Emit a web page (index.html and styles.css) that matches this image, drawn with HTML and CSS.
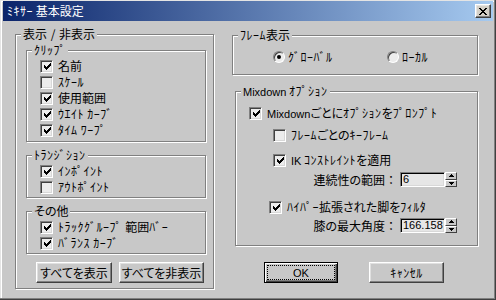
FILE: index.html
```html
<!DOCTYPE html>
<html lang="ja">
<head>
<meta charset="utf-8">
<link rel="stylesheet" href="styles.css">
</head>
<body>
<div class="window">
  <div class="titlebar">
    <span class="title"><span class="hk">ﾐｷｻｰ</span> 基本設定</span>
    <span class="close-btn"><svg width="8" height="7" viewBox="0 0 8 7" shape-rendering="crispEdges"><path d="M0 0h2v1h1v1h2V1h1V0h2v1H7v1H6v1H5v1h1v1h1v1h1v1H6V6H5V5H3v1H2v1H0V6h1V5h1V4h1V3H2V2H1V1H0z" fill="#000"/></svg></span>
  </div>
  <div class="client">
    <div class="col-left">
      <fieldset class="group">
        <legend class="legend-plain">表示 / 非表示</legend>
        <div class="body body-main">
          <fieldset class="group sub">
            <legend><span class="hk">ｸﾘｯﾌﾟ</span></legend>
            <div class="body body-sub body-clip">
              <div class="row"><span class="cb"><svg width="7" height="7" viewBox="0 0 7 7" shape-rendering="crispEdges"><path d="M6 0h1v1h-1zM5 1h2v1h-2zM0 2h1v1h-1zM4 2h3v1h-3zM0 3h2v1h-2zM3 3h3v1h-3zM0 4h5v1h-5zM1 5h3v1h-3zM2 6h1v1h-1z"/></svg></span><span>名前</span></div>
              <div class="row"><span class="cb"></span><span class="hk">ｽｹｰﾙ</span></div>
              <div class="row"><span class="cb"><svg width="7" height="7" viewBox="0 0 7 7" shape-rendering="crispEdges"><path d="M6 0h1v1h-1zM5 1h2v1h-2zM0 2h1v1h-1zM4 2h3v1h-3zM0 3h2v1h-2zM3 3h3v1h-3zM0 4h5v1h-5zM1 5h3v1h-3zM2 6h1v1h-1z"/></svg></span><span>使用範囲</span></div>
              <div class="row"><span class="cb"><svg width="7" height="7" viewBox="0 0 7 7" shape-rendering="crispEdges"><path d="M6 0h1v1h-1zM5 1h2v1h-2zM0 2h1v1h-1zM4 2h3v1h-3zM0 3h2v1h-2zM3 3h3v1h-3zM0 4h5v1h-5zM1 5h3v1h-3zM2 6h1v1h-1z"/></svg></span><span class="hk">ｳｴｲﾄ ｶｰﾌﾞ</span></div>
              <div class="row"><span class="cb"><svg width="7" height="7" viewBox="0 0 7 7" shape-rendering="crispEdges"><path d="M6 0h1v1h-1zM5 1h2v1h-2zM0 2h1v1h-1zM4 2h3v1h-3zM0 3h2v1h-2zM3 3h3v1h-3zM0 4h5v1h-5zM1 5h3v1h-3zM2 6h1v1h-1z"/></svg></span><span class="hk">ﾀｲﾑ ﾜｰﾌﾟ</span></div>
            </div>
          </fieldset>
          <fieldset class="group sub sub-next">
            <legend><span class="hk">ﾄﾗﾝｼﾞｼｮﾝ</span></legend>
            <div class="body body-sub">
              <div class="row"><span class="cb"><svg width="7" height="7" viewBox="0 0 7 7" shape-rendering="crispEdges"><path d="M6 0h1v1h-1zM5 1h2v1h-2zM0 2h1v1h-1zM4 2h3v1h-3zM0 3h2v1h-2zM3 3h3v1h-3zM0 4h5v1h-5zM1 5h3v1h-3zM2 6h1v1h-1z"/></svg></span><span class="hk">ｲﾝﾎﾟｲﾝﾄ</span></div>
              <div class="row"><span class="cb"></span><span class="hk">ｱｳﾄﾎﾟｲﾝﾄ</span></div>
            </div>
          </fieldset>
          <fieldset class="group sub sub-next">
            <legend>その他</legend>
            <div class="body body-sub">
              <div class="row"><span class="cb"><svg width="7" height="7" viewBox="0 0 7 7" shape-rendering="crispEdges"><path d="M6 0h1v1h-1zM5 1h2v1h-2zM0 2h1v1h-1zM4 2h3v1h-3zM0 3h2v1h-2zM3 3h3v1h-3zM0 4h5v1h-5zM1 5h3v1h-3zM2 6h1v1h-1z"/></svg></span><span><span class="hk">ﾄﾗｯｸｸﾞﾙｰﾌﾟ </span>範囲<span class="hk">ﾊﾞｰ</span></span></div>
              <div class="row"><span class="cb"><svg width="7" height="7" viewBox="0 0 7 7" shape-rendering="crispEdges"><path d="M6 0h1v1h-1zM5 1h2v1h-2zM0 2h1v1h-1zM4 2h3v1h-3zM0 3h2v1h-2zM3 3h3v1h-3zM0 4h5v1h-5zM1 5h3v1h-3zM2 6h1v1h-1z"/></svg></span><span class="hk">ﾊﾞﾗﾝｽ ｶｰﾌﾞ</span></div>
            </div>
          </fieldset>
          <div class="btn-row">
            <div class="btn btn-show">すべてを表示</div>
            <div class="btn btn-hide">すべてを非表示</div>
          </div>
        </div>
      </fieldset>
    </div>
    <div class="col-right">
      <fieldset class="group group-frame">
        <legend><span class="hk">ﾌﾚｰﾑ</span>表示</legend>
        <div class="body body-frame">
          <div class="radio-item radio-global"><span class="radio on"></span><span class="hk">ｸﾞﾛｰﾊﾞﾙ</span></div>
          <div class="radio-item"><span class="radio"></span><span class="hk">ﾛｰｶﾙ</span></div>
        </div>
      </fieldset>
      <fieldset class="group group-mix">
        <legend><span class="lt">Mixdown</span> <span class="hk">ｵﾌﾟｼｮﾝ</span></legend>
        <div class="body body-mix">
          <div class="row"><span class="cb"><svg width="7" height="7" viewBox="0 0 7 7" shape-rendering="crispEdges"><path d="M6 0h1v1h-1zM5 1h2v1h-2zM0 2h1v1h-1zM4 2h3v1h-3zM0 3h2v1h-2zM3 3h3v1h-3zM0 4h5v1h-5zM1 5h3v1h-3zM2 6h1v1h-1z"/></svg></span><span><span class="lt">Mixdown</span>ごとに<span class="hk">ｵﾌﾟｼｮﾝ</span>を<span class="hk">ﾌﾟﾛﾝﾌﾟﾄ</span></span></div>
          <div class="row indent-24 gap-6"><span class="cb"></span><span><span class="hk">ﾌﾚｰﾑ</span>ごとの<span class="hk">ｷｰﾌﾚｰﾑ</span></span></div>
          <div class="row indent-24 gap-9"><span class="cb"><svg width="7" height="7" viewBox="0 0 7 7" shape-rendering="crispEdges"><path d="M6 0h1v1h-1zM5 1h2v1h-2zM0 2h1v1h-1zM4 2h3v1h-3zM0 3h2v1h-2zM3 3h3v1h-3zM0 4h5v1h-5zM1 5h3v1h-3zM2 6h1v1h-1z"/></svg></span><span><span class="lt">IK</span> <span class="hk">ｺﾝｽﾄﾚｲﾝﾄ</span>を適用</span></div>
          <div class="field-row gap-4">
            <span class="field-label">連続性の範囲<span class="colon">：</span></span>
            <span class="field lt">6</span>
            <span class="spin"><span class="spin-btn"><svg width="5" height="3" viewBox="0 0 5 3" shape-rendering="crispEdges"><path d="M2 0h1v1h1v1h1v1H0V2h1V1h1z"/></svg></span><span class="spin-btn"><svg width="5" height="3" viewBox="0 0 5 3" shape-rendering="crispEdges"><path d="M0 0h5v1H4v1H3v1H2V2H1V1H0z"/></svg></span></span>
          </div>
          <div class="row indent-20 gap-12"><span class="cb"><svg width="7" height="7" viewBox="0 0 7 7" shape-rendering="crispEdges"><path d="M6 0h1v1h-1zM5 1h2v1h-2zM0 2h1v1h-1zM4 2h3v1h-3zM0 3h2v1h-2zM3 3h3v1h-3zM0 4h5v1h-5zM1 5h3v1h-3zM2 6h1v1h-1z"/></svg></span><span><span class="hk">ﾊｲﾊﾟｰ</span>拡張された脚を<span class="hk">ﾌｨﾙﾀ</span></span></div>
          <div class="field-row gap-3">
            <span class="field-label">膝の最大角度<span class="colon">：</span></span>
            <span class="field lt">166.158</span>
            <span class="spin"><span class="spin-btn"><svg width="5" height="3" viewBox="0 0 5 3" shape-rendering="crispEdges"><path d="M2 0h1v1h1v1h1v1H0V2h1V1h1z"/></svg></span><span class="spin-btn"><svg width="5" height="3" viewBox="0 0 5 3" shape-rendering="crispEdges"><path d="M0 0h5v1H4v1H3v1H2V2H1V1H0z"/></svg></span></span>
          </div>
        </div>
      </fieldset>
      <div class="dlg-buttons">
        <div class="btn btn-default btn-ok"><span class="focus"><span class="lt">OK</span></span></div>
        <div class="btn btn-cancel"><span class="hk">ｷｬﾝｾﾙ</span></div>
      </div>
    </div>
  </div>
</div>
</body>
</html>
```
FILE: styles.css
```css
* { box-sizing: border-box; }
html, body { margin: 0; padding: 0; }
body {
  width: 496px;
  height: 300px;
  overflow: hidden;
  background: #c8c8c8;
  font-family: "Noto Sans CJK JP", "Noto Sans", sans-serif;
  font-size: 12px;
  font-feature-settings: "palt";
  color: #000;
}
.hk { letter-spacing: 0.5px; }
.lt { font-family: "Liberation Sans", Arial, sans-serif; font-size: 11px; }
.colon { font-feature-settings: normal; }
.window {
  width: 496px;
  height: 300px;
  background: #c8c8c8;
  padding: 1px 3px 3px 3px;
  display: flex;
  flex-direction: column;
  box-shadow: inset -1px -1px 0 #404040, inset -2px -2px 0 #808080, inset 1px 1px 0 #e4e4e4, inset 2px 2px 0 #fff;
}
.titlebar {
  height: 20px;
  flex: none;
  display: flex;
  align-items: center;
  justify-content: space-between;
  padding: 0 2px;
  background: linear-gradient(to right, #0a246a, #a6caf0);
}
.title {
  color: #fff;
  font-size: 12px;
  line-height: 20px;
  padding-left: 2px;
  font-feature-settings: normal;
}
.close-btn {
  width: 16px;
  height: 14px;
  background: #d4d0c8;
  border: 1px solid;
  border-color: #fff #404040 #404040 #fff;
  box-shadow: inset -1px -1px 0 #808080, inset 1px 1px 0 #e4e4e4;
  display: flex;
  align-items: center;
  justify-content: center;
}
.client {
  flex: 1;
  display: flex;
  padding-left: 12px;
}
.col-left { width: 199px; padding-top: 7px; }
.col-right { width: 246px; margin-left: 18px; padding-top: 8px; }

.group {
  margin: 0;
  padding: 0;
  min-inline-size: auto;
  border: 1px solid #808080;
  box-shadow: 1px 1px 0 #fff, inset 1px 1px 0 #fff;
}
.group > legend {
  margin-left: 5px;
  padding: 0 2px;
  height: 12px;
  line-height: 12px;
  font-size: 12px;
  background: #c8c8c8;
  white-space: nowrap;
}
.group > legend.legend-plain { word-spacing: 1px; }
.body-main { padding: 4px 7px 5px 10px; }
.sub-next { margin-top: 7px; }
.body-sub { padding: 2px 0 2px 13px; }
.body-clip { padding-bottom: 3px; }

.row {
  display: flex;
  align-items: center;
  height: 16px;
  line-height: 16px;
  white-space: nowrap;
}
.cb {
  width: 13px;
  height: 13px;
  flex: none;
  margin-right: 5px;
  border: 1px solid;
  border-color: #808080 #fff #fff #808080;
  box-shadow: inset 1px 1px 0 #404040, inset -1px -1px 0 #d8d8d8;
  background: #ececec;
  display: flex;
  align-items: center;
  justify-content: center;
  padding: 1px 0 0 1px;
}
.btn {
  height: 21px;
  display: flex;
  align-items: center;
  justify-content: center;
  background: #c8c8c8;
  border: 1px solid;
  border-color: #fff #404040 #404040 #fff;
  box-shadow: inset -1px -1px 0 #808080, inset 1px 1px 0 #e0e0e0;
  line-height: 16px;
  white-space: nowrap;
}
.btn-row { display: flex; margin-top: 8px; padding-left: 10px; gap: 7px; }
.btn-show { width: 76px; }
.btn-hide { width: 85px; }

.body-frame {
  display: flex;
  padding: 8px 0 9px 40px;
}
.radio-item {
  display: flex;
  align-items: center;
  height: 16px;
  line-height: 16px;
  white-space: nowrap;
}
.radio-global { width: 114px; }
.radio {
  width: 12px;
  height: 12px;
  flex: none;
  margin-right: 3px;
  border-radius: 50%;
  border: 1px solid;
  border-color: #808080 #fff #fff #808080;
  box-shadow: inset 1px 1px 0 #404040;
  background: #ececec;
  display: flex;
  align-items: center;
  justify-content: center;
}
.radio.on::after {
  content: "";
  width: 4px;
  height: 4px;
  border-radius: 50%;
  background: #000;
}
.group-mix { margin: 10px 0 0 3px; width: 243px; }
.body-mix { padding: 8px 0 12px 13px; }
.indent-24 { padding-left: 24px; }
.indent-20 { padding-left: 20px; }
.gap-3 { margin-top: 3px; }
.gap-4 { margin-top: 4px; }
.gap-6 { margin-top: 6px; }
.gap-9 { margin-top: 9px; }
.gap-12 { margin-top: 12px; }

.field-row {
  display: flex;
  justify-content: flex-end;
  align-items: center;
  height: 15px;
  padding-right: 20px;
}
.field-label { margin-right: 3px; line-height: 15px; white-space: nowrap; }
.field {
  width: 45px;
  height: 15px;
  border: 1px solid;
  border-color: #808080 #fff #fff #808080;
  box-shadow: inset 1px 1px 0 #000, inset -1px -1px 0 #d8d8d8;
  background: #e6e6e6;
  padding-left: 2px;
  line-height: 13px;
  overflow: hidden;
  white-space: nowrap;
}
.spin {
  width: 12px;
  height: 15px;
  display: flex;
  flex-direction: column;
}
.spin-btn {
  flex: 1;
  display: flex;
  align-items: center;
  justify-content: center;
  background: #c8c8c8;
  border: 1px solid;
  border-color: #fff #404040 #404040 #fff;
}
.spin-btn svg { display: block; }

.dlg-buttons { display: flex; margin-top: 16px; padding-left: 32px; gap: 31px; }
.btn-ok { width: 74px; }
.btn-cancel { width: 75px; }
.btn-default {
  border: 1px solid #000;
  box-shadow: inset 1px 1px 0 #fff, inset -1px -1px 0 #404040, inset -2px -2px 0 #808080;
  padding: 2px;
  align-items: stretch;
}
.focus {
  flex: 1;
  display: flex;
  align-items: center;
  justify-content: center;
  border: 1px dotted #000;
  line-height: 14px;
}
```
